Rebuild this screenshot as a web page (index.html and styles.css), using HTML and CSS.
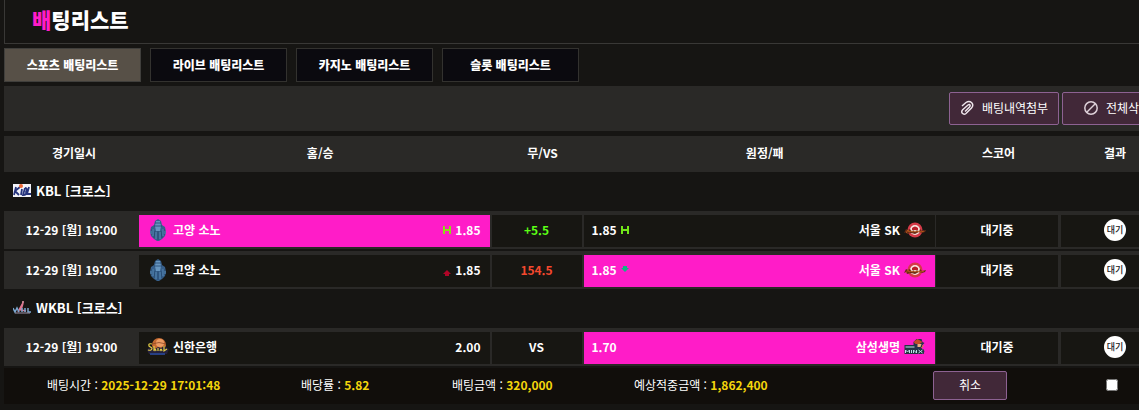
FILE: index.html
```html
<!DOCTYPE html>
<html lang="ko">
<head>
<meta charset="utf-8">
<title>배팅리스트</title>
<link rel="stylesheet" href="styles.css">
</head>
<body>
<svg class="defs" aria-hidden="true">
  <symbol id="sono" viewBox="0 0 18 22">
    <path d="M9 0 12 2 13 6 16 8 17 13 16 17 13 20 10 22H8L5 20 2 17 1 13 2 8 5 6 6 2Z" fill="#37608c"/>
    <path d="M7 2h4l1 5-1 5H7L6 7Z" fill="#6796c0"/>
    <path d="M5 7h8M6 4h6M9 12v9M6 12l-1 7M12 12l1 7M3 10v6M15 10v6" fill="none" stroke="#24486f" stroke-width=".8"/>
    <path d="M7 13v7M11 13v7M4 10v7M14 10v7M2 12v3M16 12v3" fill="none" stroke="#5687b2"/>
  </symbol>
  <symbol id="knights" viewBox="0 0 22 16">
    <circle cx="11" cy="8" r="7.500" fill="#d53a48"/><circle cx="11" cy="8" r="5" fill="#f7e5e2"/>
    <path d="M8 6q3-3 6 0v2H8Z" fill="#b9202b"/>
    <path d="M0 11 2 7l2 1 2-1 2 3 1-2 2 2 2-2 2 2 1-3 2 2 4-1-1 2-3 1-3-1-4 2-4-1-4 1-1-2Z" fill="#6a2b16"/>
    <path d="M2 11 4 8l1 2 2-1 2 1 2-1 2 1 2-1 2 1 3-1" fill="none" stroke="#c8631c" stroke-width=".8"/>
  </symbol>
  <symbol id="shinhan" viewBox="0 0 22 18">
    <circle cx="12" cy="7" r="7" fill="#c66b32"/><circle cx="13" cy="5" r="4" fill="#ed9c64"/>
    <path d="M5 6q7-3 14 0" fill="none" stroke="#8d4928" stroke-width=".8"/>
    <path d="M0 12q3-5 6-3l2 2 3-2 3 1 3-2 5 3-2 5H2Z" fill="#25213c"/>
    <path d="M5 6Q1 5 2 8l3 2q0 3-4 2M7 8v5q1-4 2 0M11 10v3M13 13q1-4 2 0M17 8v5l3-2" fill="none" stroke="#e5cf45" stroke-width="1.200"/>
    <path d="M3 16h15" stroke="#263f84" stroke-width="2"/>
  </symbol>
  <symbol id="minx" viewBox="0 0 21 16">
    <path d="M9 3 12 0h5l1 3 2 1-2 2-1 3 3 3-1 3h-5L9 9Z" fill="#27334d"/>
    <path d="M9 3 13 0l5 3-3 2h-4Z" fill="#c34d27"/><path d="M13 5h4l-1 3h-3Z" fill="#edb27d"/>
    <path d="M0 6h11v4h8v5H0Z" fill="#253443"/>
    <path d="M1 8h9M1 14v-3l2 2 2-2v3M7 11v3M9 14v-3l3 3v-3M14 11l4 3M18 11l-4 3" fill="none" stroke="#bce3e8"/>
    <path d="m17 9 2-3" stroke="#d78830"/>
  </symbol>
</svg>
<main class="page">
  <header class="title"><h1><span class="accent">배</span>팅리스트</h1></header>
  <nav class="tabs">
    <button class="tab active" type="button">스포츠 배팅리스트</button>
    <button class="tab" type="button">라이브 배팅리스트</button>
    <button class="tab" type="button">카지노 배팅리스트</button>
    <button class="tab" type="button">슬롯 배팅리스트</button>
  </nav>
  <div class="toolbar">
    <button class="action" type="button"><svg width="14" height="16" viewBox="0 0 14 16"><path d="M2 6 6 2.500Q9 .5 11.500 2.500 14 5 11.500 8L6 13.500Q4 15 2.300 13.300 1 11.500 2.700 9.700L8 5Q9.500 4 10 5.200 10.400 6 9.500 7L5 11.500" fill="none" stroke="#eee5eb" stroke-width="1.500"/></svg>배팅내역첨부</button>
    <button class="action" type="button"><svg width="14" height="14" viewBox="0 0 14 14"><circle cx="7" cy="7" r="6.200" fill="none" stroke="#ddd0d8" stroke-width="1.500"/><path d="m3 11 8-8" stroke="#ddd0d8" stroke-width="1.500"/></svg>전체삭제</button>
  </div>
  <table class="bets">
    <colgroup><col class="c-date"><col><col class="c-vs"><col><col class="c-score"><col class="c-result"></colgroup>
    <thead><tr><th class="first">경기일시</th><th class="wide">홈/승</th><th class="wide">무/VS</th><th class="wide">원정/패</th><th>스코어</th><th>결과</th></tr></thead>
    <tbody>
      <tr class="league"><th colspan="6"><div><svg width="18" height="13" viewBox="0 0 18 13"><path d="M0 0h18v13H0Z" fill="#f4f4fa"/><path d="m3 3-2 8M7 3 2 7l4 4M9 5 8 11M12 4l-2 7q4 0 3-3 2-4-1-4M16 3l-2 7h4" fill="none" stroke="#26347d" stroke-width="1.800"/><circle cx="8" cy="2" r="2" fill="#ed6735"/></svg>KBL [크로스]</div></th></tr>
      <tr class="game">
        <td class="date">12-29 [월] 19:00</td>
        <td class="side picked"><div><svg class="logo" width="22" height="22"><use href="#sono"/></svg><span class="team">고양 소노</span><svg width="8" height="8" viewBox="0 0 8 8"><path d="M1 0v8M7 0v8M1 4h6" stroke="#8bdd16" stroke-width="2"/></svg><span>1.85</span></div></td>
        <td class="green">+5.5</td>
        <td class="side away"><div><span>1.85</span><svg width="8" height="8" viewBox="0 0 8 8"><path d="M1 0v8M7 0v8M1 4h6" stroke="#72e719" stroke-width="2"/></svg><span class="team">서울 SK</span><svg class="logo" width="22" height="16"><use href="#knights"/></svg></div></td>
        <td>대기중</td><td><span class="badge">대기</span></td>
      </tr>
      <tr class="game">
        <td class="date">12-29 [월] 19:00</td>
        <td class="side"><div><svg class="logo" width="22" height="22"><use href="#sono"/></svg><span class="team">고양 소노</span><svg width="8" height="12" viewBox="0 0 8 12"><path d="m4 6 4 4H6v2H2v-2H0Z" fill="#b00527"/></svg><span>1.85</span></div></td>
        <td class="red">154.5</td>
        <td class="side away picked"><div><span>1.85</span><svg width="8" height="8" viewBox="0 0 8 8"><path d="M2 0h4v2h2L4 6 0 2h2Z" fill="#12b483"/></svg><span class="team">서울 SK</span><svg class="logo" width="22" height="16"><use href="#knights"/></svg></div></td>
        <td>대기중</td><td><span class="badge">대기</span></td>
      </tr>
      <tr class="league"><th colspan="6"><div><svg width="18" height="13" viewBox="0 0 18 13"><path d="m5 11 5-9-2 7 5 1" fill="none" stroke="#dd7791" stroke-width="1.600"/><path d="m0 7 2 4 2-4 2 4M9 7v4M12 7v4M15 7v4h3" fill="none" stroke="#7ba7d0" stroke-width="1.500"/><path d="M2 12h15" stroke="#9d93a8"/><circle cx="10" cy="1" r="1" fill="#f2a1b1"/></svg>WKBL [크로스]</div></th></tr>
      <tr class="game">
        <td class="date">12-29 [월] 19:00</td>
        <td class="side"><div><svg class="logo" width="22" height="18"><use href="#shinhan"/></svg><span class="team">신한은행</span><span>2.00</span></div></td>
        <td>VS</td>
        <td class="side away picked"><div><span>1.70</span><span class="team">삼성생명</span><svg class="logo" width="22" height="16"><use href="#minx"/></svg></div></td>
        <td>대기중</td><td><span class="badge">대기</span></td>
      </tr>
      <tr class="summary"><td colspan="6"><div>
        <span>배팅시간 : <b>2025-12-29 17:01:48</b></span>
        <span>배당률 : <b>5.82</b></span>
        <span>배팅금액 : <b>320,000</b></span>
        <span>예상적중금액 : <b>1,862,400</b></span>
        <button class="action cancel" type="button">취소</button>
        <input type="checkbox" aria-label="배팅 선택">
      </div></td></tr>
    </tbody>
  </table>
</main>
</body>
</html>
```
FILE: styles.css
```css
* { box-sizing: border-box; }
html { overflow: hidden; background: #161513; }
body {
  margin: 0;
  color: #fff;
  font: 12px/18px "Noto Sans CJK KR", sans-serif;
}
button { font: inherit; color: inherit; padding: 0 0 1px; }
svg { flex: none; }
.defs { display: none; }
.page { margin: 0 -35px 0 4px; }
.title {
  height: 44px;
  padding: 4px 27px;
  border: solid #393836;
  border-width: 0 0 1px 1px;
}
.title h1 { margin: 0; font-size: 21px; line-height: 30px; font-weight: 900; }
.accent { color: #ff1cc8; }
.tabs { display: flex; gap: 9px; margin: 4px 0; }
.tab {
  width: 137px;
  height: 34px;
  border: 1px solid #33322f;
  background: #0b0a0f;
  font-weight: 900;
}
.tab.active { background: #575047; border-color: #403f3c; }
.toolbar {
  display: flex;
  justify-content: flex-end;
  align-items: center;
  gap: 3px;
  height: 45px;
  padding-right: 2px;
  background: #2a2927;
}
.action {
  display: flex;
  align-items: center;
  justify-content: center;
  gap: 8px;
  width: 110px;
  height: 33px;
  border: 1px solid #8d6292;
  border-radius: 2px;
  background: #412838;
}
.bets {
  width: calc(100% - 5px);
  margin-top: 3px;
  table-layout: fixed;
  border-collapse: separate;
  border-spacing: 0 2px;
  font-weight: 700;
  text-align: center;
}
.c-date { width: 135px; }
.c-vs { width: 92px; }
.c-score { width: 125px; }
.c-result { width: 108px; }
.bets th, .bets td { padding: 0 0 2px; }
.bets thead th { height: 36px; background: #2a2927; }
.bets thead .wide { padding-left: 10px; }
.bets thead .first { padding-left: 5px; }
.league th { height: 35px; font-size: 13px; }
.league div { display: flex; align-items: center; gap: 5px; padding-left: 9px; }
.game td {
  height: 38px;
  border: solid #2a2927;
  border-width: 4px 2px 2px 0;
  background: #171612;
}
.game .date { border-right-width: 0; background: #2a2927; }
.game .away { border-right-width: 1px; }
.game .away + td { border-right-width: 3px; }
.game td:last-child { border-right-width: 0; }
.game .picked { background: #ff1cc8; }
.side div { display: flex; align-items: center; gap: 4px; padding: 0 9px 0 8px; }
.side .team { margin-right: auto; }
.away .team { margin: 0 0 0 auto; }
.green { color: #5cff16; }
.red { color: #f4482e; }
.badge {
  display: block;
  width: 22px;
  margin: 0 auto;
  border-radius: 50%;
  background: #fff;
  color: #222;
  font-size: 9px;
  font-weight: 500;
  line-height: 22px;
}
.summary td { height: 36px; background: #110e0b; font-weight: 400; text-align: left; }
.summary div {
  display: grid;
  grid-template-columns: 254fr 151fr 182fr 299fr 173fr 63fr;
  align-items: center;
  padding-left: 43px;
}
.summary b { color: #f4d50c; }
.cancel { width: 74px; height: 29px; }
.summary input { width: 12px; height: 12px; margin: 0; }
```
